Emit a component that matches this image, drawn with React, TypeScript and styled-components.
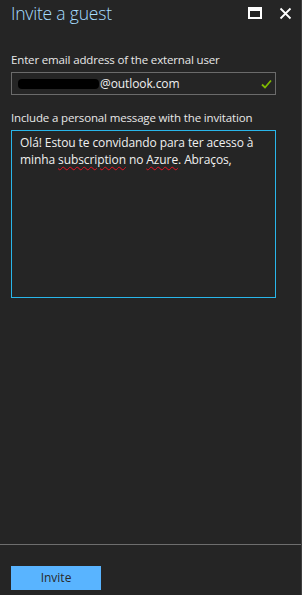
import styled, { createGlobalStyle } from 'styled-components'

const Global = createGlobalStyle`
  html, body {
    margin: 0;
    padding: 0;
    background: #252525;
  }
  * { box-sizing: border-box; }
`

const Blade = styled.div`
  width: 302px;
  height: 595px;
  background: #252525;
  border-right: 1px solid #3f3f3f;
  display: flex;
  flex-direction: column;
  font-family: "Open Sans", "Noto Sans", sans-serif;
  color: #e6e6e6;
`

const Header = styled.div`
  display: flex;
  align-items: flex-start;
  padding: 1px 8px 0 11px;
  height: 48px;
`

const Title = styled.h1`
  flex: 1;
  margin: 0;
  font-size: 17.5px;
  font-weight: 300;
  color: #a6dcff;
  letter-spacing: -0.2px;
  line-height: 24px;
`

const IconButton = styled.div`
  width: 16px;
  height: 16px;
  margin-top: 4px;
  margin-left: 14px;
  display: flex;
  align-items: center;
  justify-content: center;
`

const Body = styled.div`
  flex: 1;
  padding: 4px 25px 0 11px;
  display: flex;
  flex-direction: column;
`

const Label = styled.label`
  font-size: 11.5px;
  color: #e8e8e8;
  line-height: 16px;
  margin-bottom: 4px;
  letter-spacing: -0.15px;
`

const Field = styled.div`
  height: 23px;
  border: 1px solid #6b6b6b;
  display: flex;
  align-items: center;
  padding: 0 3px 0 6px;
  font-size: 12px;
  margin-bottom: 15px;
`

const Redacted = styled.span`
  display: inline-block;
  width: 81px;
  height: 10px;
  background: #000;
  border-radius: 4px;
  margin-right: 1px;
`

const Value = styled.span`
  flex: 1;
  color: #f0f0f0;
  letter-spacing: -0.1px;
`

const Message = styled.div`
  height: 168px;
  border: 1px solid #29b6ea;
  padding: 3px 8px;
  font-size: 12px;
  line-height: 17px;
  color: #f0f0f0;
  letter-spacing: -0.1px;
`

const Misspelled = styled.span`
  text-decoration: underline wavy #e81123;
  text-decoration-thickness: 1px;
  text-underline-offset: 2px;
`

const Footer = styled.div`
  border-top: 1px solid #6e6e6e;
  height: 51px;
  padding: 20px 11px 0;
`

const PrimaryButton = styled.button`
  width: 90px;
  height: 24px;
  border: none;
  background: #59b4ff;
  color: #2a2a2a;
  font-family: "Open Sans", "Noto Sans", sans-serif;
  font-size: 12px;
  padding: 0;
  cursor: pointer;
`

export default function App() {
  return (
    <>
      <Global />
      <Blade>
        <Header>
          <Title>Invite a guest</Title>
          <IconButton>
            <svg width="14" height="12" viewBox="0 0 14 12">
              <rect x="1" y="1" width="12" height="10" fill="none" stroke="#fff" strokeWidth="2" />
              <rect x="1" y="1" width="12" height="3" fill="#fff" />
            </svg>
          </IconButton>
          <IconButton>
            <svg width="13" height="13" viewBox="0 0 13 13">
              <path d="M1.5 1.5 L11.5 11.5 M11.5 1.5 L1.5 11.5" stroke="#fff" strokeWidth="1.8" />
            </svg>
          </IconButton>
        </Header>
        <Body>
          <Label>Enter email address of the external user</Label>
          <Field>
            <Redacted />
            <Value>@outlook.com</Value>
            <svg width="11" height="10" viewBox="0 0 11 10">
              <path d="M1 5.5 L4 8.5 L10 1.5" fill="none" stroke="#7fba00" strokeWidth="1.8" />
            </svg>
          </Field>
          <Label>Include a personal message with the invitation</Label>
          <Message>
            Olá! Estou te convidando para ter acesso à minha <Misspelled>subscription</Misspelled> no{' '}
            <Misspelled>Azure</Misspelled>. Abraços,
          </Message>
        </Body>
        <Footer>
          <PrimaryButton>Invite</PrimaryButton>
        </Footer>
      </Blade>
    </>
  )
}
